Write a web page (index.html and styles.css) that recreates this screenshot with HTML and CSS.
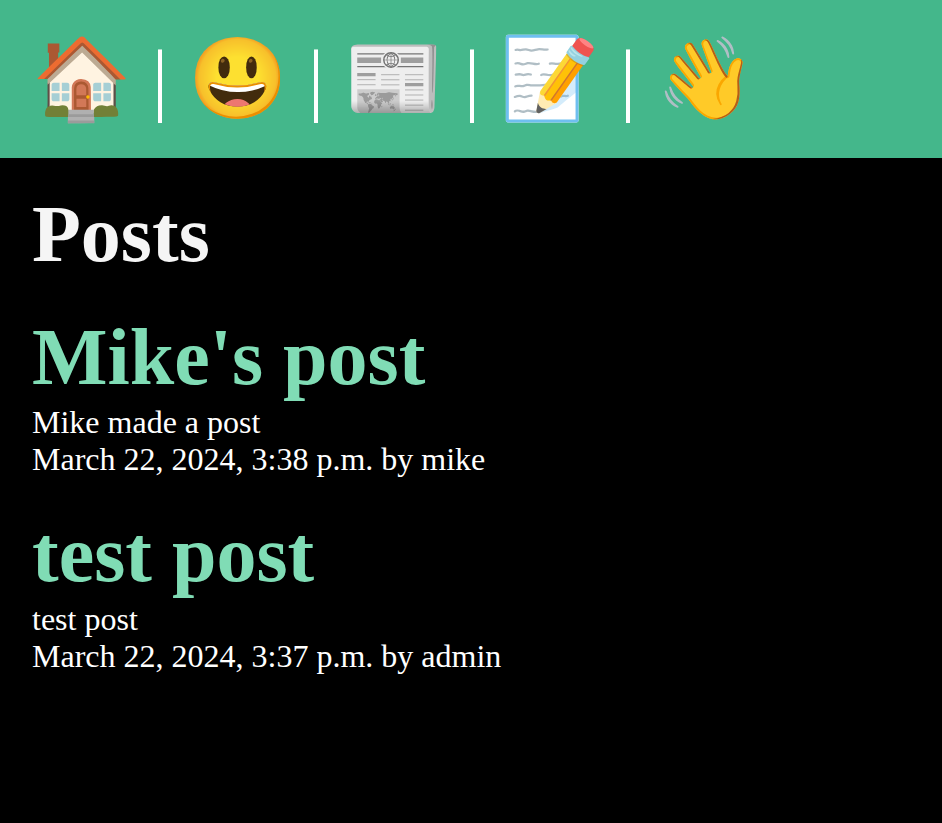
FILE: index.html
```html
<!DOCTYPE html>
<html lang="en">
<head><meta charset="utf-8"><title>Posts</title><link rel="stylesheet" href="styles.css"></head>
<body>
<nav class="nav"><a>🏠</a> | <a>😃</a> | <a>📰</a> | <a>📝</a> | <a>👋</a></nav>
<main class="main">
<h1 class="title">Posts</h1>
<article class="post"><h2 class="post-title">Mike's post</h2><p class="line">Mike made a post</p><p class="line">March 22, 2024, 3:38 p.m. by mike</p></article>
<article class="post"><h2 class="post-title">test post</h2><p class="line">test post</p><p class="line">March 22, 2024, 3:37 p.m. by admin</p></article>
</main>
</body>
</html>
```
FILE: styles.css
```css
html, body { margin: 0; background: #000; color: #fff; font-family: "Liberation Serif", serif; }
.nav { background: #44b78b; padding: 32px; font-size: 80px; line-height: 94px; color: #fff; }
.main { padding: 32px; }
.title { margin: 0 0 35px; font-size: 80px; line-height: 88px; color: #f5f5f5; }
.post-title { margin: 0 0 3px; font-size: 80px; line-height: 88px; color: #80dcb5; }
.line { margin: 0; font-size: 32px; line-height: 37px; }
.post { margin-bottom: 32px; }
```
